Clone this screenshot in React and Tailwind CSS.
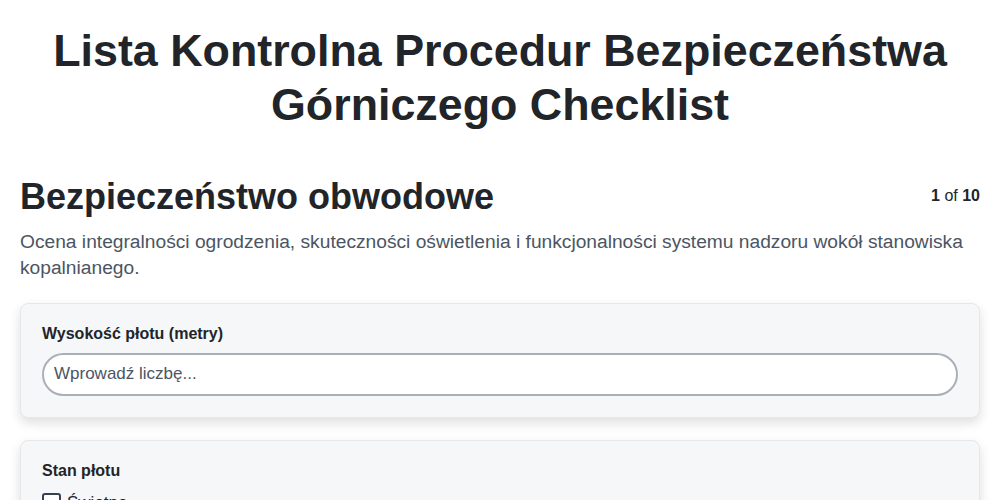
import React from 'react';

const sans = { fontFamily: '"Liberation Sans", Arial, sans-serif' };

const App = () => {
  return (
    <div className="min-h-screen bg-white px-5 text-[#212529]" style={sans}>
      {/* Nagłówek listy kontrolnej */}
      <h1 className="pt-[24px] text-center text-[44.8px] font-bold leading-[1.2]">
        Lista Kontrolna Procedur Bezpieczeństwa Górniczego Checklist
      </h1>

      {/* Sekcja */}
      <div className="mt-[43px]">
        <div className="flex items-center justify-between">
          <h2 className="text-[36px] font-bold leading-[1.2]">Bezpieczeństwo obwodowe</h2>
          <div className="text-[16px] leading-[1.5]">
            <span className="font-bold">1</span> of <span className="font-bold">10</span>
          </div>
        </div>
        <p className="mt-[11px] text-[19.2px] leading-[26px] text-[#4b5563]">
          Ocena integralności ogrodzenia, skuteczności oświetlenia i funkcjonalności systemu nadzoru wokół stanowiska kopalnianego.
        </p>

        <div className="mt-[22px] flex flex-col gap-[22px]">
          {/* Pole liczbowe */}
          <div className="rounded-lg border border-[#e5e7eb] bg-[#f6f7f9] px-[21px] pt-[18px] pb-[21px] shadow-[0_5px_12px_rgba(0,0,0,0.13)]">
            <label className="mb-[7px] block text-[16px] font-bold leading-[1.5]">Wysokość płotu (metry)</label>
            <input
              type="number"
              placeholder="Wprowadź liczbę..."
              className="block h-[43px] w-full rounded-full border-2 border-[#a9b0b9] bg-white px-[10px] text-[17px] text-[#212529] outline-none placeholder:text-[#4b5563]"
            />
          </div>

          {/* Pole wyboru */}
          <div className="rounded-lg border border-[#e5e7eb] bg-[#f6f7f9] px-[21px] pt-[18px] pb-[21px] shadow-[0_5px_12px_rgba(0,0,0,0.13)]">
            <div className="mb-[7px] text-[16px] font-bold leading-[1.5]">Stan płotu</div>
            <div className="flex flex-col gap-2">
              {['Świetne', 'Dobre', 'Wymaga naprawy', 'Uszkodzone'].map(opt => (
                <label key={opt} className="flex items-center gap-[6px] text-[17px] leading-[1.5]">
                  <span className="inline-block h-[19px] w-[19px] shrink-0 rounded-[3px] border-2 border-[#374151] bg-white" />
                  {opt}
                </label>
              ))}
            </div>
          </div>
        </div>
      </div>
    </div>
  );
};

export default App;
